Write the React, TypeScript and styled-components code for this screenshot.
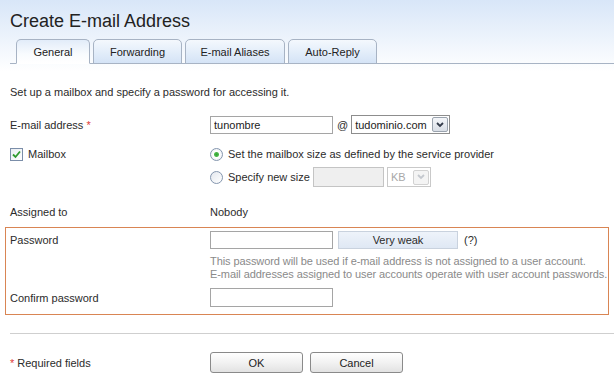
import styled, { createGlobalStyle } from "styled-components"

const GlobalStyle = createGlobalStyle`
  html, body {
    margin: 0;
    padding: 0;
  }
  body {
    width: 614px;
    height: 387px;
    overflow: hidden;
    background: linear-gradient(to bottom, #d8e6f8 0px, #ffffff 72px);
    font-family: "Liberation Sans", Arial, sans-serif;
    font-size: 11px;
    color: #2b2b2b;
  }
`

const tabs = ["General", "Forwarding", "E-mail Aliases", "Auto-Reply"]
const tabWidths = [74, 89, 100, 89]

export default function App() {
  return (
    <>
      <GlobalStyle />
      <Page>
        <Title>Create E-mail Address</Title>
        <TabBar>
          {tabs.map((t, i) => (
            <Tab key={t} $active={i === 0} style={{ width: tabWidths[i] }}>
              {t}
            </Tab>
          ))}
        </TabBar>

        <Content>
          <Intro>Set up a mailbox and specify a password for accessing it.</Intro>

          <Row $height={18} $top={16}>
            <Label>
              E-mail address&nbsp;<Req>*</Req>
            </Label>
            <Field>
              <TextInput $width={123} defaultValue="tunombre" />
              <At>@</At>
              <Select $width={99}>
                <SelectText>tudominio.com</SelectText>
                <ArrowBox>
                  <Chevron />
                </ArrowBox>
              </Select>
            </Field>
          </Row>

          <Row $height={18} $top={12}>
            <Label>
              <CheckBox>
                <svg width="9" height="9" viewBox="0 0 9 9">
                  <path d="M1 4.5 L3.5 7 L8 1.5" stroke="#2e9a2e" strokeWidth="1.8" fill="none" />
                </svg>
              </CheckBox>
              Mailbox
            </Label>
            <Field>
              <Radio $checked />
              <RadioText>Set the mailbox size as defined by the service provider</RadioText>
            </Field>
          </Row>

          <Row $height={20} $top={4}>
            <Label />
            <Field>
              <Radio />
              <RadioText>Specify new size</RadioText>
              <DisabledInput />
              <Select $width={44} $disabled>
                <SelectText>KB</SelectText>
                <ArrowBox $disabled>
                  <Chevron $disabled />
                </ArrowBox>
              </Select>
            </Field>
          </Row>

          <Row $height={16} $top={17}>
            <Label>Assigned to</Label>
            <Field>Nobody</Field>
          </Row>

          <Highlight>
            <Row $height={18} $top={0}>
              <Label>Password</Label>
              <Field>
                <TextInput $width={123} />
                <Strength>Very weak</Strength>
                <Hint>(?)</Hint>
              </Field>
            </Row>
            <HelpRow>
              <Label />
              <HelpText>
                This password will be used if e-mail address is not assigned to a user account.
                <br />
                E-mail addresses assigned to user accounts operate with user account passwords.
              </HelpText>
            </HelpRow>
            <Row $height={19} $top={7}>
              <Label>Confirm password</Label>
              <Field>
                <TextInput $width={123} $height={19} />
              </Field>
            </Row>
          </Highlight>

          <Separator />

          <Row $height={21} $top={18}>
            <Label>
              <Req>*</Req>
              <RequiredText>Required fields</RequiredText>
            </Label>
            <Field>
              <Button>OK</Button>
              <Button>Cancel</Button>
            </Field>
          </Row>
        </Content>
      </Page>
    </>
  )
}

const Page = styled.div`
  padding-top: 10px;
`

const Title = styled.h1`
  margin: 0 0 0 10px;
  font-family: "Liberation Sans", Arial, sans-serif;
  font-weight: normal;
  font-size: 18px;
  line-height: 22px;
  color: #222;
`

const TabBar = styled.div`
  display: flex;
  gap: 3px;
  margin: 7px 0 0 10px;
  padding-left: 6px;
  border-bottom: 1px solid #a7b3c4;
  height: 24px;
`

const Tab = styled.div<{ $active?: boolean }>`
  box-sizing: border-box;
  height: 25px;
  border: 1px solid #a7b3c4;
  border-bottom: ${(p) => (p.$active ? "1px solid #fff" : "1px solid #a7b3c4")};
  border-radius: 5px 5px 0 0;
  display: flex;
  align-items: center;
  justify-content: center;
  font-size: 11px;
  color: #222;
  background: ${(p) =>
    p.$active
      ? "linear-gradient(to bottom, #e2ecf9 0%, #f8fbfe 60%, #ffffff 100%)"
      : "linear-gradient(to bottom, #f4f8fd 0%, #e4eefa 50%, #d4e3f6 100%)"};
`

const Content = styled.div`
  padding: 0 6px 0 10px;
`

const Intro = styled.div`
  margin-top: 21px;
  line-height: 14px;
`

const Row = styled.div<{ $height: number; $top: number }>`
  display: grid;
  grid-template-columns: 200px 1fr;
  align-items: center;
  height: ${(p) => p.$height}px;
  margin-top: ${(p) => p.$top}px;
`

const Label = styled.div`
  display: flex;
  align-items: center;
  white-space: nowrap;
`

const Req = styled.span`
  color: #e03a3a;
`

const RequiredText = styled.span`
  margin-left: 3px;
`

const Field = styled.div`
  display: flex;
  align-items: center;
  white-space: nowrap;
`

const TextInput = styled.input<{ $width: number; $height?: number }>`
  box-sizing: border-box;
  width: ${(p) => p.$width}px;
  height: ${(p) => p.$height ?? 18}px;
  margin: 0;
  padding: 0 3px;
  border: 1px solid #a5a5a5;
  font-family: inherit;
  font-size: 11px;
  color: #222;
  outline: none;
`

const At = styled.span`
  margin: 0 3px 0 4px;
`

const Select = styled.div<{ $width: number; $disabled?: boolean }>`
  box-sizing: border-box;
  width: ${(p) => p.$width}px;
  height: ${(p) => (p.$disabled ? 20 : 19)}px;
  margin-left: ${(p) => (p.$disabled ? 3 : 0)}px;
  border: 1px solid ${(p) => (p.$disabled ? "#c9c9c9" : "#8d8d8d")};
  background: #fff;
  display: flex;
  align-items: center;
  justify-content: space-between;
  padding: 0 1px 0 3px;
  color: ${(p) => (p.$disabled ? "#a8a8a8" : "#222")};
`

const SelectText = styled.span`
  font-size: 11px;
`

const ArrowBox = styled.div<{ $disabled?: boolean }>`
  box-sizing: border-box;
  width: 16px;
  height: 15px;
  border: 1px solid ${(p) => (p.$disabled ? "#d2d2d2" : "#9aa3ae")};
  border-radius: 2px;
  background: ${(p) =>
    p.$disabled ? "#f4f4f4" : "linear-gradient(to bottom, #f4f6f9, #d9dee6)"};
  display: flex;
  align-items: center;
  justify-content: center;
`

function Chevron({ $disabled }: { $disabled?: boolean }) {
  return (
    <svg width="8" height="6" viewBox="0 0 8 6">
      <path
        d="M1 1 L4 4 L7 1"
        stroke={$disabled ? "#c4c8ce" : "#333b4a"}
        strokeWidth="1.8"
        fill="none"
      />
    </svg>
  )
}

const CheckBox = styled.span`
  box-sizing: border-box;
  width: 13px;
  height: 13px;
  margin-right: 5px;
  border: 1px solid #7b8ea9;
  background: linear-gradient(135deg, #e9edf2, #ffffff);
  display: inline-flex;
  align-items: center;
  justify-content: center;
`

const Radio = styled.span<{ $checked?: boolean }>`
  box-sizing: border-box;
  width: 13px;
  height: 13px;
  border-radius: 50%;
  border: 1px solid #8496ae;
  background: ${(p) =>
    p.$checked
      ? "radial-gradient(circle, #33a233 0px, #4cb84c 2px, #ffffff 3px, #eef1f5 6px)"
      : "linear-gradient(135deg, #e4e8ee, #ffffff)"};
  margin-right: 5px;
`

const RadioText = styled.span``

const DisabledInput = styled.div`
  box-sizing: border-box;
  width: 71px;
  height: 20px;
  margin-left: 3px;
  border: 1px solid #c4c4c4;
  background: #efefef;
`

const Highlight = styled.div`
  box-sizing: border-box;
  margin: 7px 0 0 -5px;
  width: 604px;
  height: 88px;
  border: 1px solid #d98553;
  padding: 3px 0 0 4px;
`

const Strength = styled.div`
  box-sizing: border-box;
  width: 120px;
  height: 18px;
  margin-left: 5px;
  border: 1px solid #c9d2de;
  background: linear-gradient(to bottom, #eef3fa, #dfe8f4);
  display: flex;
  align-items: center;
  justify-content: center;
  font-size: 11px;
`

const Hint = styled.span`
  margin-left: 6px;
`

const HelpRow = styled.div`
  display: grid;
  grid-template-columns: 200px 1fr;
  margin-top: 6px;
`

const HelpText = styled.div`
  color: #8a8a8a;
  line-height: 13px;
  white-space: nowrap;
  letter-spacing: -0.08px;
`

const Separator = styled.div`
  margin-top: 18px;
  height: 1px;
  margin-right: -6px;
  background: #cfcfcf;
`

const Button = styled.button`
  box-sizing: border-box;
  width: 93px;
  height: 21px;
  margin: 0 7px 0 0;
  padding: 0;
  border: 1px solid #8a8a8a;
  border-radius: 3px;
  background: linear-gradient(to bottom, #ffffff 0%, #f2f2f2 50%, #e2e2e2 100%);
  font-family: inherit;
  font-size: 11px;
  color: #222;
`
